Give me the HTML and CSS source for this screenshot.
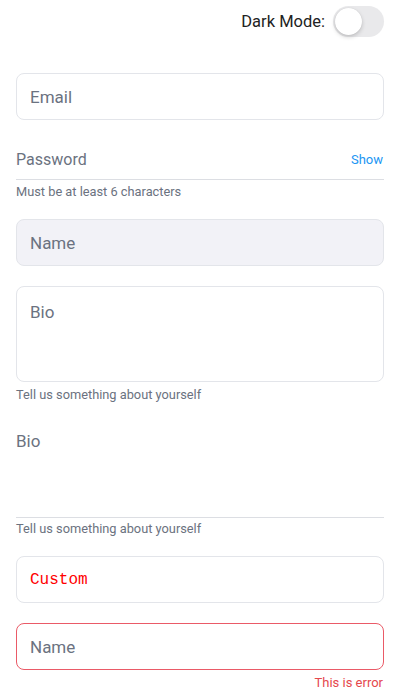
FILE: index.html
```html
<!DOCTYPE html>
<html lang="en">
<head>
<meta charset="utf-8">
<title>Form</title>
<link rel="stylesheet" href="styles.css">
</head>
<body>
<div class="page">
  <div class="topbar">
    <span class="topbar-label">Dark Mode:</span>
    <span class="switch"><span class="switch-thumb"></span></span>
  </div>

  <form class="form">
    <div class="field">
      <input class="input boxed" type="text" placeholder="Email">
    </div>

    <div class="field">
      <div class="underline-row">
        <input class="input plain" type="password" placeholder="Password">
        <span class="show">Show</span>
      </div>
      <div class="helper">Must be at least 6 characters</div>
    </div>

    <div class="field">
      <input class="input boxed filled" type="text" placeholder="Name">
    </div>

    <div class="field">
      <textarea class="textarea boxed-area" placeholder="Bio"></textarea>
      <div class="helper helper-wide">Tell us something about yourself</div>
    </div>

    <div class="field">
      <textarea class="textarea underline-area" placeholder="Bio"></textarea>
      <div class="helper helper-tight">Tell us something about yourself</div>
    </div>

    <div class="field">
      <input class="input boxed custom" type="text" value="Custom">
    </div>

    <div class="field">
      <input class="input boxed invalid" type="text" placeholder="Name">
      <div class="helper error">This is error</div>
    </div>
  </form>
</div>
</body>
</html>
```

FILE: styles.css
```css
* { box-sizing: border-box; }

html, body {
  margin: 0;
  padding: 0;
  background: #ffffff;
}

body {
  font-family: "Roboto", "Inter", "Liberation Sans", sans-serif;
  color: #1f2937;
}

.page {
  padding: 6px 16px 0 16px;
}

.topbar {
  display: flex;
  justify-content: flex-end;
  align-items: center;
  gap: 8px;
  height: 31px;
}

.topbar-label {
  font-size: 16.5px;
  color: #222222;
}

.switch {
  position: relative;
  width: 51px;
  height: 31px;
  border-radius: 16px;
  background: #e9e9eb;
  display: inline-block;
}

.switch-thumb {
  position: absolute;
  top: 2px;
  left: 2px;
  width: 27px;
  height: 27px;
  border-radius: 50%;
  background: #ffffff;
  box-shadow: 0 2px 4px rgba(0, 0, 0, 0.18), 0 0 1px rgba(0, 0, 0, 0.12);
}

.form {
  display: flex;
  flex-direction: column;
  gap: 20px;
  margin-top: 36px;
}

.field {
  display: flex;
  flex-direction: column;
}

.input, .textarea {
  font-family: inherit;
  font-size: 17px;
  color: #1f2937;
  outline: none;
  margin: 0;
  width: 100%;
}

.input::placeholder, .textarea::placeholder {
  color: #6b7280;
  opacity: 1;
}

.boxed {
  height: 47px;
  border: 1px solid #e3e5ea;
  border-radius: 8px;
  padding: 0 13px;
  background: #ffffff;
}

.filled {
  background: #f2f2f7;
}

.underline-row {
  display: flex;
  align-items: center;
  height: 40px;
  border-bottom: 1px solid #dcdee3;
}

.plain {
  flex: 1;
  border: none;
  background: transparent;
  padding: 0;
  font-size: 16px;
  height: 39px;
}

.show {
  font-size: 13px;
  color: #2196f3;
  padding-right: 1px;
}

.helper {
  font-size: 12.8px;
  line-height: 15px;
  color: #6b7280;
  margin-top: 4px;
}

.helper-wide {
  margin-top: 5px;
}

.helper-tight {
  margin-top: 3px;
}

.textarea {
  resize: none;
  display: block;
  line-height: 22px;
}

.boxed-area {
  height: 96px;
  border: 1px solid #e3e5ea;
  border-radius: 8px;
  padding: 14px 13px;
  background: #ffffff;
}

.underline-area {
  height: 96px;
  border: none;
  border-bottom: 1px solid #dcdee3;
  padding: 8px 0 0 0;
  background: transparent;
}

.custom {
  font-family: "Liberation Mono", "Courier New", monospace;
  font-size: 16px;
  color: #ff0000;
}

.invalid {
  border-color: #ea5a67;
}

.error {
  color: #e5484d;
  text-align: right;
  font-size: 13px;
  margin-top: 5px;
  padding-right: 1px;
}
```
